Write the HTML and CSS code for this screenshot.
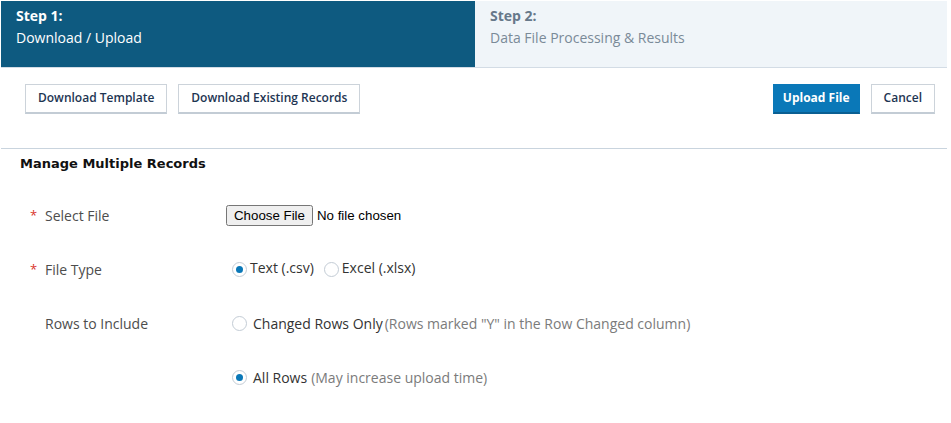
FILE: index.html
```html
<!DOCTYPE html>
<html lang="en">
<head>
  <meta charset="UTF-8" />
  <meta name="viewport" content="width=device-width, initial-scale=1.0"/>
  <title>Manage Multiple Records</title>
  <link rel="stylesheet" href="styles.css">
</head>
<body>

<div class="page">
  <div class="steps">
    <div class="step active">
      <div class="step-num">Step 1:</div>
      <div class="step-name">Download / Upload</div>
    </div>
    <div class="step">
      <div class="step-num">Step 2:</div>
      <div class="step-name">Data File Processing &amp; Results</div>
    </div>
  </div>

  <div class="toolbar">
    <div class="btn-group">
      <button class="btn">Download Template</button>
      <button class="btn">Download Existing Records</button>
    </div>
    <div class="btn-group">
      <button class="btn primary">Upload File</button>
      <button class="btn">Cancel</button>
    </div>
  </div>

  <h2 class="section-title">Manage Multiple Records</h2>

  <div class="form">
    <div class="row">
      <label class="label"><span class="req">*</span>Select File</label>
      <div class="field">
        <input type="file" class="file-input" />
      </div>
    </div>

    <div class="row">
      <label class="label"><span class="req">*</span>File Type</label>
      <div class="field">
        <label class="radio"><input type="radio" name="ftype" checked /><span>Text (.csv)</span></label>
        <label class="radio"><input type="radio" name="ftype" /><span>Excel (.xlsx)</span></label>
      </div>
    </div>

    <div class="row">
      <label class="label"><span class="req"></span>Rows to Include</label>
      <div class="field">
        <label class="radio wide"><input type="radio" name="rows" /><span>Changed Rows Only</span><span class="hint tight">(Rows marked "Y" in the Row Changed column)</span></label>
      </div>
    </div>

    <div class="row">
      <div class="label"></div>
      <div class="field">
        <label class="radio wide"><input type="radio" name="rows" checked /><span>All Rows</span><span class="hint">(May increase upload time)</span></label>
      </div>
    </div>
  </div>
</div>

</body>
</html>
```

FILE: styles.css
```css
body {
  margin: 0;
  font-family: 'Open Sans', sans-serif;
  color: #333;
  background: #fff;
}

.page {
  width: 946px;
  padding: 1px 0 0 1px;
}

/* step header */
.steps {
  display: flex;
  border-bottom: 1px solid #d3dce5;
}

.step {
  flex: 1;
  height: 66px;
  box-sizing: border-box;
  padding: 4px 15px;
  background: #f0f5f9;
  font-size: 14px;
  line-height: 22px;
  color: #7a8a98;
}

.step.active {
  flex: 0 0 474px;
  background: #0e5a80;
  color: #fff;
}

.step-num {
  font-weight: 700;
}

.step.active .step-num {
  color: #fff;
}

.step .step-num {
  color: #66788a;
}

/* buttons */
.toolbar {
  display: flex;
  justify-content: space-between;
  padding: 16px 12px 0 24px;
  height: 64px;
  border-bottom: 1px solid #c9d4de;
}

.btn-group {
  display: flex;
  gap: 11px;
  align-items: flex-start;
}

.btn {
  font-family: 'Open Sans', sans-serif;
  font-size: 12px;
  font-weight: 600;
  color: #1d3552;
  background: #fff;
  border: 1px solid #ccd3da;
  border-bottom: 2px solid #c3ccd5;
  height: 30px;
  padding: 0 12px 3px;
  cursor: pointer;
}

.btn.primary {
  background: #0a78b8;
  border-color: #0a78b8;
  border-bottom-color: #0a5f92;
  color: #fff;
  font-weight: 700;
  padding: 0 9px 3px;
}

.section-title {
  margin: 0;
  padding: 4px 0 0 19px;
  font-family: 'DejaVu Sans', sans-serif;
  font-size: 13px;
  font-weight: 700;
  color: #111;
  line-height: 22px;
}

/* form */
.form {
  padding: 13px 0 0 0;
}

.row {
  display: flex;
  align-items: center;
  height: 54px;
}

.label {
  width: 225px;
  padding-left: 29px;
  box-sizing: border-box;
  font-size: 14px;
  color: #4d4d4d;
  display: flex;
  align-items: center;
}

.req {
  color: #d9342b;
  width: 15px;
  font-size: 13px;
}

.field {
  display: flex;
  align-items: center;
  gap: 10px;
}

.file-input {
  font-family: 'Liberation Sans', Arial, sans-serif;
  font-size: 13.3px;
  color: #000;
}

.radio {
  display: flex;
  align-items: center;
  font-size: 14px;
  color: #333;
  margin-left: 6px;
}

.radio + .radio {
  margin-left: 0;
}

.radio span {
  margin-top: -4px;
}

.radio input {
  appearance: none;
  -webkit-appearance: none;
  width: 15px;
  height: 15px;
  margin: 0 3px 0 0;
  border: 1px solid #c3ccd5;
  border-radius: 50%;
  background: #fff;
  position: relative;
}

.radio.wide input {
  margin: 0 6px 0 0;
}

.radio.wide span {
  margin-top: 0;
}

.radio input:checked::after {
  content: "";
  position: absolute;
  left: 3px;
  top: 3px;
  width: 7px;
  height: 7px;
  border-radius: 50%;
  background: #0a78b8;
}

.hint {
  color: #7b7b7b;
  margin-left: 4px;
}

.hint.tight {
  margin-left: 2px;
}
```
